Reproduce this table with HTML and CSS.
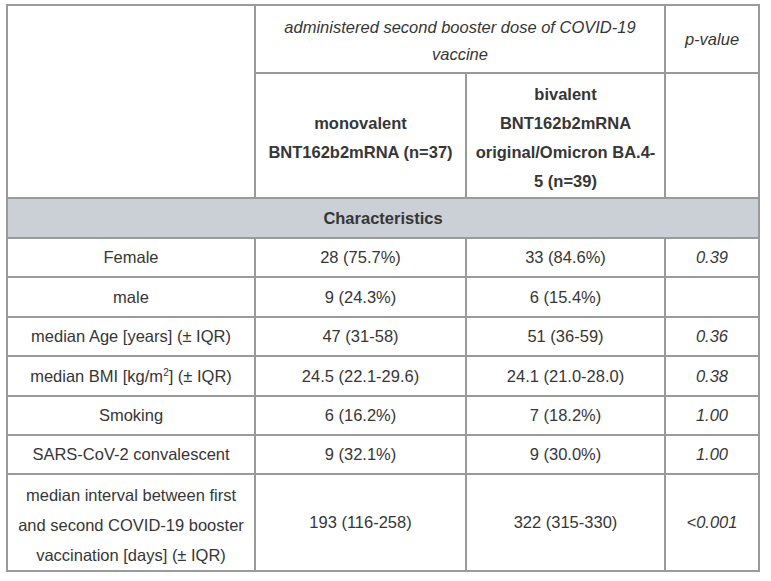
FILE: index.html
```html
<!DOCTYPE html>
<html lang="en">
<head>
<meta charset="utf-8">
<title>Characteristics table</title>
<link rel="stylesheet" href="styles.css">
</head>
<body>
<div class="page">
<table class="data">
  <colgroup>
    <col class="c1"><col class="c2"><col class="c3"><col class="c4">
  </colgroup>
  <thead>
    <tr class="h1">
      <th rowspan="2" class="blank"></th>
      <th colspan="2" class="it title">administered second booster dose of COVID-19<br>vaccine</th>
      <th class="it">p-value</th>
    </tr>
    <tr class="h2">
      <th class="b">monovalent<br>BNT162b2mRNA (n=37)</th>
      <th class="b">bivalent<br>BNT162b2mRNA<br>original/Omicron BA.4-<br>5 (n=39)</th>
      <th></th>
    </tr>
  </thead>
  <tbody>
    <tr class="section"><td colspan="4">Characteristics</td></tr>
    <tr class="r"><td>Female</td><td>28 (75.7%)</td><td>33 (84.6%)</td><td class="p">0.39</td></tr>
    <tr class="r tall"><td>male</td><td>9 (24.3%)</td><td>6 (15.4%)</td><td class="p"></td></tr>
    <tr class="r"><td>median Age [years] (± IQR)</td><td>47 (31-58)</td><td>51 (36-59)</td><td class="p">0.36</td></tr>
    <tr class="r tall"><td>median BMI [kg/m<sup>2</sup>] (± IQR)</td><td>24.5 (22.1-29.6)</td><td>24.1 (21.0-28.0)</td><td class="p">0.38</td></tr>
    <tr class="r"><td>Smoking</td><td>6 (16.2%)</td><td>7 (18.2%)</td><td class="p">1.00</td></tr>
    <tr class="r"><td>SARS-CoV-2 convalescent</td><td>9 (32.1%)</td><td>9 (30.0%)</td><td class="p">1.00</td></tr>
    <tr class="last"><td class="multi">median interval between first<br>and second COVID-19 booster<br>vaccination [days] (± IQR)</td><td>193 (116-258)</td><td>322 (315-330)</td><td class="p">&lt;0.001</td></tr>
  </tbody>
</table>
</div>
</body>
</html>
```
FILE: styles.css
```css
html, body {
  margin: 0;
  padding: 0;
  background: #ffffff;
}
.page {
  padding: 4px 0 0 6px;
}
.data {
  border-collapse: collapse;
  table-layout: fixed;
  width: 752px;
  font-family: "Liberation Sans", Arial, sans-serif;
  font-size: 16.5px;
  line-height: 29px;
  color: #363636;
  border: 2px solid #8e8e8e;
}
.c1 { width: 248px; }
.c2 { width: 211px; }
.c3 { width: 199px; }
.c4 { width: 94px; }
.data th, .data td {
  border: 2px solid #9a9a9a;
  text-align: center;
  vertical-align: middle;
  padding: 0 4px;
  font-weight: normal;
}
.data .it { font-style: italic; }
.data .b { font-weight: bold; }
.data .title {
  line-height: 27px;
  padding-top: 3px;
}
.h1 { height: 68px; }
.h2 { height: 125px; }
.h2 th { padding-top: 4px; }
.section { height: 40px; }
.section td {
  background: #cbd0d6;
  font-weight: bold;
}
.r { height: 39px; }
.r.tall { height: 40px; }
.last { height: 97px; }
.data .multi {
  line-height: 30px;
  padding-top: 4px;
}
.data .p { font-style: italic; }
sup {
  font-size: 10px;
  line-height: 0;
  vertical-align: 6px;
}
```
